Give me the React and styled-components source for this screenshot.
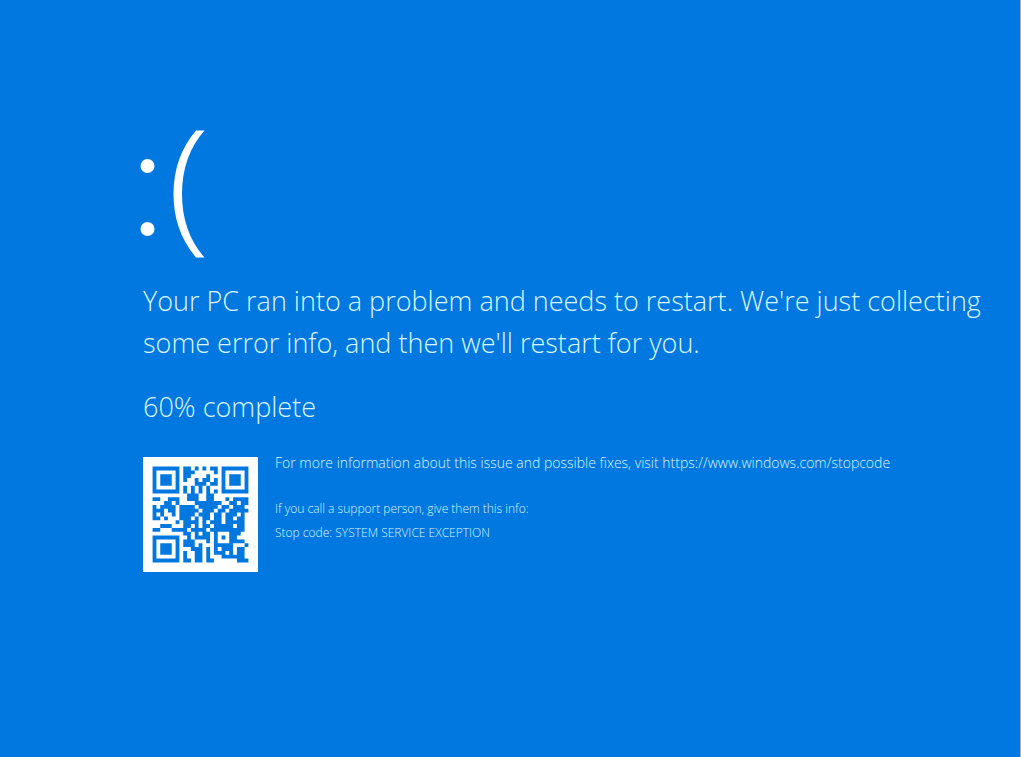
import React from 'react';
import styled, { createGlobalStyle } from 'styled-components';

const GlobalStyle = createGlobalStyle`
  body {
    margin: 0;
    background-color: #0078df;
    color: #d9f6ff;
    font-family: 'Open Sans', 'Noto Sans', sans-serif;
    font-weight: 300;
  }
`;

const Screen = styled.main`
  box-sizing: border-box;
  min-height: 100vh;
  padding: 128px 32px 32px 143px;
  border-right: 1px solid #a9b4bd;
`;

const Face = styled.svg`
  display: block;
  width: 72px;
  height: 132px;
  margin-left: -8px;
`;

const Message = styled.h1`
  margin: 20px 0 0;
  font-size: 27px;
  font-weight: 300;
  line-height: 42px;
`;

const Progress = styled.p`
  margin: 22px 0 0;
  font-size: 27px;
  line-height: 42px;
`;

const Details = styled.section`
  display: flex;
  gap: 17px;
  margin-top: 29px;
`;

const QrCode = styled.svg`
  flex: none;
  width: 115px;
  height: 115px;
  background-color: #fff;
`;

const DetailsText = styled.div`
  margin-top: -6px;
`;

const Info = styled.p`
  margin: 0;
  font-size: ${(props) => (props.$small ? '12px' : '14px')};
  line-height: 24px;
`;

const Support = styled.div`
  margin-top: 22px;
`;

const StopLink = styled.a`
  color: inherit;
  text-decoration: none;
`;

// 1 is a dark module, 0 a light one
const QR_ROWS = [
  '1111111011010101101111111',
  '1000001011100000101000001',
  '1011101011000010001011101',
  '1011101010010110101011101',
  '1011101000011101101011101',
  '1000001010101010001000001',
  '1111111010101010101111111',
  '0000000001110011000000000',
  '1100111001110011000101111',
  '0001101000011111110011011',
  '1011110111101111101101110',
  '1110110111110111011011111',
  '1010010111101110110111010',
  '1101000111010110110110110',
  '0000001011110101110111110',
  '0011100011010110111110110',
  '1100011110111101111111110',
  '0000000011010110100011100',
  '1111111001011110101011000',
  '1000001011100010100011110',
  '1011101011101000111110001',
  '1011101000111010101110110',
  '1011101010011010111010110',
  '1000001010011010001111110',
  '1111111011011011000000111',
];

const modules = QR_ROWS.flatMap((row, y) =>
  [...row].map((bit, x) => (bit === '1' ? `M${x} ${y}h1v1h-1z` : '')),
).join('');

const App = () => {
  return (
    <>
      <GlobalStyle />
      <Screen>
        <Face viewBox="0 0 72 132" role="img" aria-label="Sad face">
          <circle cx="12.5" cy="38" r="7" fill="#fff" />
          <circle cx="12.5" cy="101" r="7" fill="#fff" />
          <path
            d="M61 2.500H69.500Q47 28 47 66T69.500 129.500H61Q38.500 103 38.500 66T61 2.500Z"
            fill="#fff"
          />
        </Face>
        <Message>
          Your PC ran into a problem and needs to restart. We're just collecting
          some error info, and then we'll restart for you.
        </Message>
        <Progress>60% complete</Progress>
        <Details>
          <QrCode viewBox="-2.500 -2.500 30 30" role="img" aria-label="QR code">
            <path d={modules} fill="#0078df" />
          </QrCode>
          <DetailsText>
            <Info>
              For more information about this issue and possible fixes, visit{' '}
              <StopLink href="https://www.windows.com/stopcode">
                https://www.windows.com/stopcode
              </StopLink>
            </Info>
            <Support>
              <Info $small>If you call a support person, give them this info:</Info>
              <Info $small>Stop code: SYSTEM SERVICE EXCEPTION</Info>
            </Support>
          </DetailsText>
        </Details>
      </Screen>
    </>
  );
};

export default App;
